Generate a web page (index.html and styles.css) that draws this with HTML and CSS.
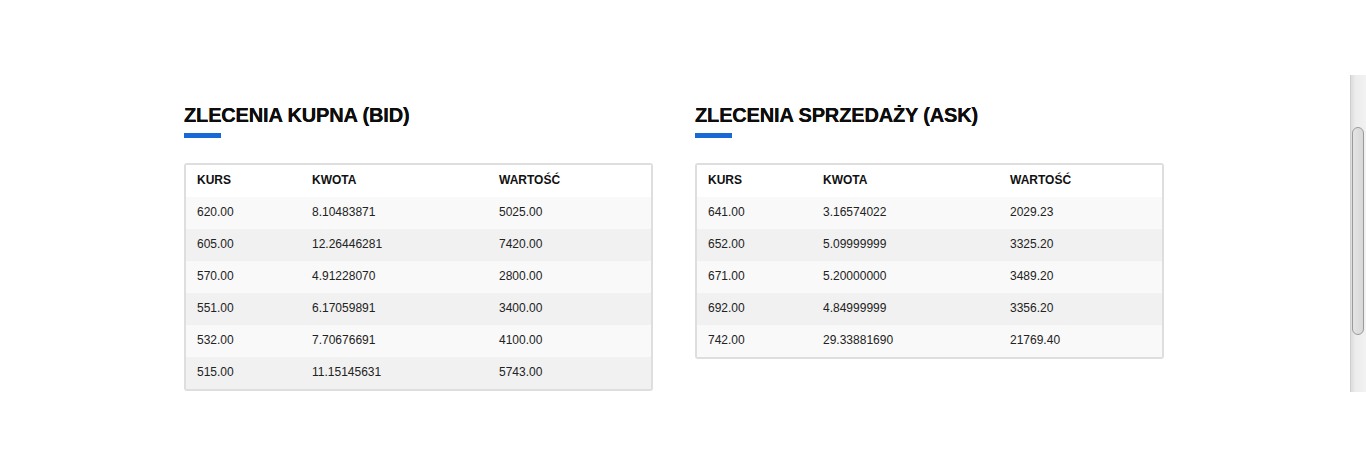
FILE: index.html
```html
<!DOCTYPE html>
<html lang="pl">
<head>
<meta charset="utf-8">
<title>Zlecenia</title>
<link rel="stylesheet" href="styles.css">
</head>
<body>
<main class="orders">
  <section class="book">
    <h2 class="book-title">ZLECENIA KUPNA (BID)</h2>
    <div class="table-box">
      <table class="book-table">
        <thead><tr><th class="c1">KURS</th><th class="c2">KWOTA</th><th>WARTOŚĆ</th></tr></thead>
        <tbody>
          <tr><td>620.00</td><td>8.10483871</td><td>5025.00</td></tr>
          <tr><td>605.00</td><td>12.26446281</td><td>7420.00</td></tr>
          <tr><td>570.00</td><td>4.91228070</td><td>2800.00</td></tr>
          <tr><td>551.00</td><td>6.17059891</td><td>3400.00</td></tr>
          <tr><td>532.00</td><td>7.70676691</td><td>4100.00</td></tr>
          <tr><td>515.00</td><td>11.15145631</td><td>5743.00</td></tr>
        </tbody>
      </table>
    </div>
  </section>
  <section class="book">
    <h2 class="book-title">ZLECENIA SPRZEDAŻY (ASK)</h2>
    <div class="table-box">
      <table class="book-table">
        <thead><tr><th class="c1">KURS</th><th class="c2">KWOTA</th><th>WARTOŚĆ</th></tr></thead>
        <tbody>
          <tr><td>641.00</td><td>3.16574022</td><td>2029.23</td></tr>
          <tr><td>652.00</td><td>5.09999999</td><td>3325.20</td></tr>
          <tr><td>671.00</td><td>5.20000000</td><td>3489.20</td></tr>
          <tr><td>692.00</td><td>4.84999999</td><td>3356.20</td></tr>
          <tr><td>742.00</td><td>29.33881690</td><td>21769.40</td></tr>
        </tbody>
      </table>
    </div>
  </section>
</main>
<div class="fake-scrollbar" aria-hidden="true"><div class="fake-thumb"></div></div>
</body>
</html>
```
FILE: styles.css
```css
html, body {
  margin: 0;
  padding: 0;
  background: #fff;
}
body {
  font-family: "Liberation Sans", Arial, sans-serif;
  color: #222;
  height: 468px;
  overflow: hidden;
}
.orders {
  display: flex;
  gap: 42px;
  padding: 104px 0 0 184px;
  align-items: flex-start;
}
.book {
  width: 469px;
}
.book-title {
  margin: 0;
  font-size: 20px;
  line-height: 23px;
  font-weight: bold;
  letter-spacing: -0.15px;
  color: #0d0d0d;
  text-shadow: 0 0 0.3px #000;
}
.book-title::after {
  content: "";
  display: block;
  width: 37px;
  height: 5px;
  margin-top: 6px;
  background: #1769d6;
}
.table-box {
  margin-top: 25px;
  border: 2px solid #dedede;
  border-radius: 3px;
  overflow: hidden;
}
.book-table {
  width: 100%;
  border-collapse: collapse;
  font-size: 12px;
}
.book-table th,
.book-table td {
  height: 32px;
  padding: 0 11px 2px;
  text-align: left;
  vertical-align: middle;
  box-sizing: border-box;
}
.book-table th {
  font-weight: bold;
  color: #111;
  background: #fff;
}
.book-table .c1 { width: 115px; }
.book-table .c2 { width: 187px; }
.book-table td { color: #222; }
.book-table tbody tr:nth-child(odd) { background: #f9f9f9; }
.book-table tbody tr:nth-child(even) { background: #f1f1f1; }
.fake-scrollbar {
  position: absolute;
  left: 1350px;
  top: 75px;
  width: 16px;
  height: 317px;
  background: linear-gradient(to right, #dcdcdc, #ececec 30%, #f2f2f2);
  border-left: 1px solid #d0d0d0;
  box-sizing: border-box;
}
.fake-thumb {
  position: absolute;
  left: 1px;
  top: 52px;
  width: 10px;
  height: 206px;
  border: 1px solid #9a9a9a;
  border-radius: 6px;
  background: linear-gradient(to right, #e4e4e4, #d8d8d8);
}
```
